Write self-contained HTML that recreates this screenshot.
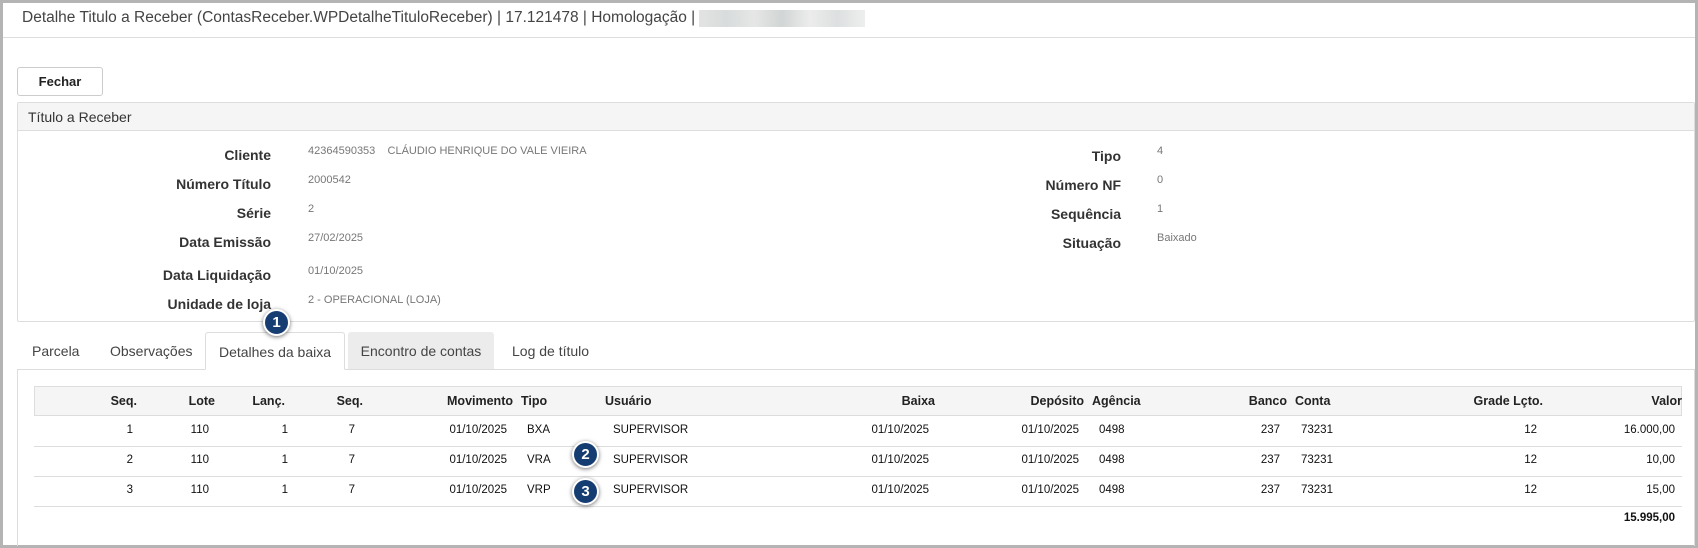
<!DOCTYPE html>
<html><head><meta charset="utf-8">
<style>
*{margin:0;padding:0;box-sizing:border-box}
body{width:1698px;height:548px;overflow:hidden;background:#fff;font-family:"Liberation Sans",sans-serif;position:relative}
.frame{position:absolute;left:0;top:0;width:1698px;height:548px;border:3px solid #b4b4b4}
.a{position:absolute;white-space:nowrap}
.title{left:22px;top:9px;font-size:15.5px;color:#444;display:flex;align-items:center}
.blur{display:inline-block;width:166px;height:17px;margin-left:4px;background:linear-gradient(90deg,#e3e3e3,#d8dcdc,#e6e6e6,#d2d5d5,#ececec,#dde0e0,#eee)}
.hline{left:3px;right:3px;top:37px;height:1px;background:#ddd}
.btn{left:17px;top:67px;width:86px;height:29px;border:1px solid #ccc;border-radius:3px;font-weight:bold;font-size:13px;color:#222;text-align:center;line-height:27px;background:#fff}
.panel{left:17px;top:102px;width:1678px;height:220px;border:1px solid #ddd;border-radius:2px}
.phead{left:18px;top:103px;width:1676px;height:28px;background:#f5f5f5;border-bottom:1px solid #ddd;font-size:14px;color:#333;padding:5px 10px;line-height:18px}
.lb{font-weight:bold;font-size:14px;color:#333;text-align:right;width:260px}
.v{font-size:11px;color:#777}
.tab{top:332px;height:38px;font-size:14px;color:#444;line-height:38px}
.content{left:17px;top:369px;width:1678px;height:177px;border:1px solid #ddd;border-bottom:none}
.th{left:34px;top:386px;width:1648px;height:30px;background:#f5f5f5;border:1px solid #ddd}
.h{font-weight:bold;font-size:12.5px;color:#222;top:394px}
.rl{left:34px;width:1648px;height:1px;background:#ddd}
.d{font-size:11.5px;color:#111}
.r{text-align:right}
.badge{width:27px;height:27px;border-radius:50%;background:#163d72;border:2px solid #fff;box-shadow:0 1px 4px rgba(0,0,0,.55);color:#fff;font-weight:bold;font-size:15px;text-align:center;line-height:23px}
</style></head><body>
<div class="frame"></div>
<div class="a title">Detalhe Titulo a Receber (ContasReceber.WPDetalheTituloReceber) | 17.121478 | Homologação | <span class="blur"></span></div>
<div class="a hline"></div>
<div class="a btn">Fechar</div>
<div class="a panel"></div>
<div class="a phead">Título a Receber</div>

<div class="a lb" style="left:11px;top:147px">Cliente</div>
<div class="a lb" style="left:11px;top:176px">Número Título</div>
<div class="a lb" style="left:11px;top:205px">Série</div>
<div class="a lb" style="left:11px;top:234px">Data Emissão</div>
<div class="a lb" style="left:11px;top:267px">Data Liquidação</div>
<div class="a lb" style="left:11px;top:296px">Unidade de loja</div>
<div class="a v" style="left:308px;top:145px">42364590353 &nbsp;&nbsp;&nbsp;CLÁUDIO HENRIQUE DO VALE VIEIRA</div>
<div class="a v" style="left:308px;top:174px">2000542</div>
<div class="a v" style="left:308px;top:203px">2</div>
<div class="a v" style="left:308px;top:232px">27/02/2025</div>
<div class="a v" style="left:308px;top:265px">01/10/2025</div>
<div class="a v" style="left:308px;top:294px">2 - OPERACIONAL (LOJA)</div>

<div class="a lb" style="left:861px;top:148px">Tipo</div>
<div class="a lb" style="left:861px;top:177px">Número NF</div>
<div class="a lb" style="left:861px;top:206px">Sequência</div>
<div class="a lb" style="left:861px;top:235px">Situação</div>
<div class="a v" style="left:1157px;top:145px">4</div>
<div class="a v" style="left:1157px;top:174px">0</div>
<div class="a v" style="left:1157px;top:203px">1</div>
<div class="a v" style="left:1157px;top:232px">Baixado</div>

<div class="a content"></div>
<div class="a tab" style="left:32px">Parcela</div>
<div class="a tab" style="left:110px">Observações</div>
<div class="a tab" style="left:205px;width:140px;background:#fff;border:1px solid #ddd;border-bottom:1px solid #fff;text-align:center;border-radius:3px 3px 0 0">Detalhes da baixa</div>
<div class="a tab" style="left:348px;width:146px;background:#ececec;text-align:center;border-radius:3px 3px 0 0;height:37px">Encontro de contas</div>
<div class="a tab" style="left:512px">Log de título</div>

<div class="a th"></div>
<div class="a h r" style="right:1561px">Seq.</div>
<div class="a h r" style="right:1483px">Lote</div>
<div class="a h r" style="right:1413px">Lanç.</div>
<div class="a h r" style="right:1335px">Seq.</div>
<div class="a h r" style="right:1185px">Movimento</div>
<div class="a h" style="left:521px">Tipo</div>
<div class="a h" style="left:605px">Usuário</div>
<div class="a h r" style="right:763px">Baixa</div>
<div class="a h r" style="right:614px">Depósito</div>
<div class="a h" style="left:1092px">Agência</div>
<div class="a h r" style="right:411px">Banco</div>
<div class="a h" style="left:1295px">Conta</div>
<div class="a h r" style="right:155px">Grade Lçto.</div>
<div class="a h r" style="right:16px">Valor</div>

<div class="a rl" style="top:446px"></div>
<div class="a rl" style="top:476px"></div>
<div class="a rl" style="top:506px"></div>

<div class="a d r" style="right:1565px;top:424px">1</div><div class="a d r" style="right:1489px;top:424px">110</div><div class="a d r" style="right:1410px;top:424px">1</div><div class="a d r" style="right:1343px;top:424px">7</div><div class="a d r" style="right:1191px;top:424px">01/10/2025</div><div class="a d" style="left:527px;top:424px">BXA</div><div class="a d" style="left:613px;top:424px">SUPERVISOR</div><div class="a d r" style="right:769px;top:424px">01/10/2025</div><div class="a d r" style="right:619px;top:424px">01/10/2025</div><div class="a d" style="left:1099px;top:424px">0498</div><div class="a d r" style="right:418px;top:424px">237</div><div class="a d" style="left:1301px;top:424px">73231</div><div class="a d r" style="right:161px;top:424px">12</div><div class="a d r" style="right:23px;top:424px">16.000,00</div>

<div class="a d r" style="right:1565px;top:454px">2</div><div class="a d r" style="right:1489px;top:454px">110</div><div class="a d r" style="right:1410px;top:454px">1</div><div class="a d r" style="right:1343px;top:454px">7</div><div class="a d r" style="right:1191px;top:454px">01/10/2025</div><div class="a d" style="left:527px;top:454px">VRA</div><div class="a d" style="left:613px;top:454px">SUPERVISOR</div><div class="a d r" style="right:769px;top:454px">01/10/2025</div><div class="a d r" style="right:619px;top:454px">01/10/2025</div><div class="a d" style="left:1099px;top:454px">0498</div><div class="a d r" style="right:418px;top:454px">237</div><div class="a d" style="left:1301px;top:454px">73231</div><div class="a d r" style="right:161px;top:454px">12</div><div class="a d r" style="right:23px;top:454px">10,00</div>

<div class="a d r" style="right:1565px;top:484px">3</div><div class="a d r" style="right:1489px;top:484px">110</div><div class="a d r" style="right:1410px;top:484px">1</div><div class="a d r" style="right:1343px;top:484px">7</div><div class="a d r" style="right:1191px;top:484px">01/10/2025</div><div class="a d" style="left:527px;top:484px">VRP</div><div class="a d" style="left:613px;top:484px">SUPERVISOR</div><div class="a d r" style="right:769px;top:484px">01/10/2025</div><div class="a d r" style="right:619px;top:484px">01/10/2025</div><div class="a d" style="left:1099px;top:484px">0498</div><div class="a d r" style="right:418px;top:484px">237</div><div class="a d" style="left:1301px;top:484px">73231</div><div class="a d r" style="right:161px;top:484px">12</div><div class="a d r" style="right:23px;top:484px">15,00</div>

<div class="a d r" style="right:23px;top:512px;font-weight:bold">15.995,00</div>

<div class="a badge" style="left:263px;top:309px">1</div>
<div class="a badge" style="left:572px;top:441px">2</div>
<div class="a badge" style="left:572px;top:478px">3</div>
</body></html>
